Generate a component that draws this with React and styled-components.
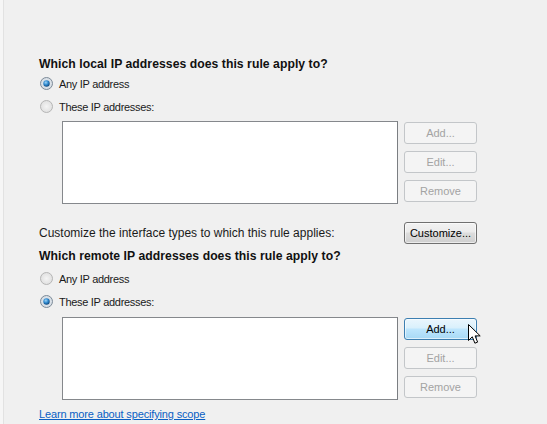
import React from "react";
import styled, { createGlobalStyle } from "styled-components";

const Global = createGlobalStyle`
  html, body { margin: 0; padding: 0; background: #f0f0f0; }
  body { font-family: "Liberation Sans", Arial, sans-serif; }
`;

const Page = styled.div`
  position: relative;
  box-sizing: border-box;
  width: 547px;
  height: 424px;
  overflow: hidden;
  padding: 56px 0 0 39px;
  background: linear-gradient(to right, #f6f6f6 0 3px, #e2e2e2 3px 4px, #f0f0f0 4px);
  color: #000;
`;

const Heading = styled.div`
  height: 16px;
  line-height: 16px;
  font-size: 12.2px;
  font-weight: bold;
  letter-spacing: 0.05px;
  color: #111;
  white-space: nowrap;
  margin-top: ${(p) => p.$mt || 0}px;
`;

const RadioGroup = styled.div`
  display: flex;
  flex-direction: column;
  margin-top: ${(p) => p.$mt || 0}px;
`;

const RadioRow = styled.label`
  display: flex;
  align-items: center;
  height: 23px;
  padding-left: 1px;
  gap: 6px;
  font-size: 11px;
  letter-spacing: -0.3px;
  color: #1a1a1a;
  white-space: nowrap;
`;

const ListArea = styled.div`
  display: flex;
  align-items: flex-start;
  margin-top: ${(p) => p.$mt || 0}px;
  margin-left: 23px;
`;

const ListBox = styled.div`
  box-sizing: border-box;
  width: 336px;
  height: 83px;
  background: #fff;
  border: 1px solid #85888c;
  border-right-color: #7b7e82;
`;

const ButtonColumn = styled.div`
  position: relative;
  display: flex;
  flex-direction: column;
  gap: 7px;
  margin-left: 6px;
  padding-top: 1px;
`;

const Button = styled.button`
  box-sizing: border-box;
  width: 73px;
  height: 22px;
  padding: 0;
  border-radius: 3px;
  font-family: "Liberation Sans", Arial, sans-serif;
  font-size: 11px;
  cursor: default;
  border: 1px solid ${(p) => (p.$state === "disabled" ? "#c3c6c9" : p.$state === "hover" ? "#3c7fb1" : "#707070")};
  color: ${(p) => (p.$state === "disabled" ? "#a3a3a3" : "#000")};
  background: ${(p) =>
    p.$state === "disabled"
      ? "#f4f4f4"
      : p.$state === "hover"
      ? "linear-gradient(#eaf6fd 0%, #d9f0fc 45%, #bee6fd 50%, #a7d9f5 100%)"
      : "linear-gradient(#f2f2f2 0%, #ebebeb 45%, #dddddd 50%, #cfcfcf 100%)"};
  box-shadow: ${(p) => (p.$state === "disabled" ? "none" : "inset 0 0 0 1px rgba(255,255,255,0.6)")};
`;

const CustomizeRow = styled.div`
  display: flex;
  align-items: center;
  height: 22px;
  margin-top: 18px;
`;

const CustomizeText = styled.div`
  width: 365px;
  font-size: 12px;
  color: #1a1a1a;
  white-space: nowrap;
`;

const Link = styled.a`
  display: inline-block;
  margin-top: 6px;
  line-height: 16px;
  font-size: 11px;
  letter-spacing: -0.15px;
  color: #0a5fc4;
  text-decoration: underline;
`;

const Cursor = styled.svg`
  position: absolute;
  left: 64px;
  top: 7px;
  pointer-events: none;
`;

function Radio({ checked }) {
  return (
    <svg width="13" height="13" viewBox="0 0 13 13">
      <defs>
        <radialGradient id={checked ? "rgOn" : "rgOff"} cx="0.5" cy="0.5" r="0.5">
          <stop offset="0" stopColor={checked ? "#e8eef4" : "#f4f4f4"} />
          <stop offset="1" stopColor={checked ? "#d4dbe2" : "#e0e0e0"} />
        </radialGradient>
        <radialGradient id="dot" cx="0.4" cy="0.35" r="0.7">
          <stop offset="0" stopColor="#9fd4f5" />
          <stop offset="0.5" stopColor="#2f8ad0" />
          <stop offset="1" stopColor="#0c3f72" />
        </radialGradient>
      </defs>
      <circle cx="6.5" cy="6.5" r="6" fill={`url(#${checked ? "rgOn" : "rgOff"})`} stroke={checked ? "#7d8b98" : "#b5b5b5"} strokeWidth="1" />
      {checked && <circle cx="6.5" cy="6.5" r="3.2" fill="url(#dot)" />}
    </svg>
  );
}

function IpChoice({ checked, mt }) {
  return (
    <RadioGroup $mt={mt}>
      <RadioRow>
        <Radio checked={checked === 0} />
        Any IP address
      </RadioRow>
      <RadioRow>
        <Radio checked={checked === 1} />
        These IP addresses:
      </RadioRow>
    </RadioGroup>
  );
}

export default function App() {
  return (
    <>
      <Global />
      <Page>
        <Heading>Which local IP addresses does this rule apply to?</Heading>
        <IpChoice checked={0} />
        <ListArea $mt={3}>
          <ListBox />
          <ButtonColumn>
            <Button $state="disabled">Add...</Button>
            <Button $state="disabled">Edit...</Button>
            <Button $state="disabled">Remove</Button>
          </ButtonColumn>
        </ListArea>
        <CustomizeRow>
          <CustomizeText>Customize the interface types to which this rule applies:</CustomizeText>
          <Button $state="normal">Customize...</Button>
        </CustomizeRow>
        <Heading $mt={4}>Which remote IP addresses does this rule apply to?</Heading>
        <IpChoice checked={1} mt={3} />
        <ListArea $mt={4}>
          <ListBox />
          <ButtonColumn>
            <Button $state="hover">Add...</Button>
            <Button $state="disabled">Edit...</Button>
            <Button $state="disabled">Remove</Button>
            <Cursor width="13" height="21" viewBox="0 0 13 21">
              <path d="M0.5 0.5 L0.5 16.5 L4.3 12.8 L6.9 19.2 L9.6 18.1 L7.1 11.9 L12.2 11.9 Z" fill="#fff" stroke="#000" strokeWidth="1" strokeLinejoin="miter" />
            </Cursor>
          </ButtonColumn>
        </ListArea>
        <Link href="#">Learn more about specifying scope</Link>
      </Page>
    </>
  );
}
